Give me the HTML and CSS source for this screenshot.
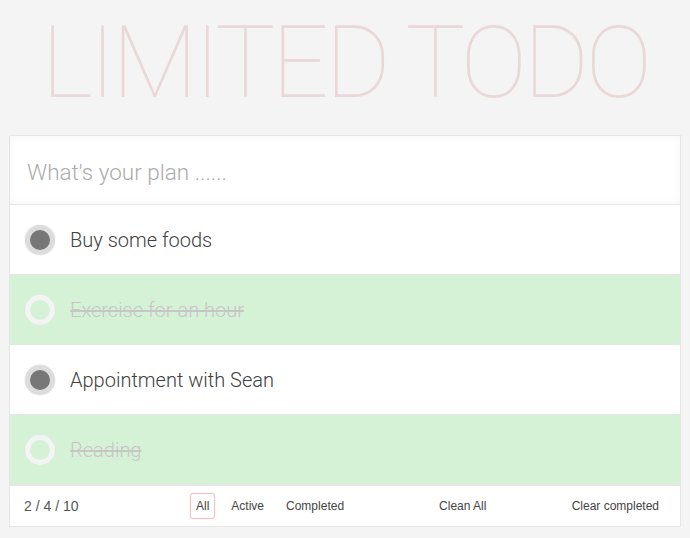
FILE: index.html
```html
<!DOCTYPE html>
<html>
<head>
<meta charset="utf-8">
<link rel="stylesheet" href="styles.css">
</head>
<body>
<div class="app">
  <h1 class="title">LIMITED TODO</h1>
  <section class="board">
    <div class="new-row">
      <input class="new-todo" placeholder="What's your plan ......">
    </div>
    <ul class="list">
      <li class="item">
        <span class="toggle"></span>
        <span class="label">Buy some foods</span>
      </li>
      <li class="item done">
        <span class="toggle"></span>
        <span class="label">Exercise for an hour</span>
      </li>
      <li class="item">
        <span class="toggle"></span>
        <span class="label">Appointment with Sean</span>
      </li>
      <li class="item done">
        <span class="toggle"></span>
        <span class="label">Reading</span>
      </li>
    </ul>
    <footer class="footer">
      <span class="count">2 / 4 / 10</span>
      <ul class="filters">
        <li><a class="filter selected">All</a></li>
        <li><a class="filter">Active</a></li>
        <li><a class="filter">Completed</a></li>
      </ul>
      <a class="clean-all">Clean All</a>
      <a class="clear-completed">Clear completed</a>
    </footer>
  </section>
</div>
</body>
</html>
```

FILE: styles.css
```css
html, body {
  margin: 0;
  padding: 0;
  background: #f4f4f4;
}

.app {
  padding: 0 9px;
}

.title {
  margin: 0;
  height: 135px;
  box-sizing: border-box;
  padding-top: 8px;
  text-align: center;
  font-family: Roboto, "Liberation Sans", sans-serif;
  font-weight: 100;
  font-size: 100px;
  line-height: 110px;
  letter-spacing: -3.5px;
  color: #ead8d8;
}

.board {
  background: #fff;
  border: 1px solid #e6e6e6;
}

.new-row {
  height: 68px;
  border-bottom: 1px solid #e6e6e6;
  box-shadow: inset 0 0 10px rgba(0, 0, 0, 0.04);
  display: flex;
  align-items: center;
}

.new-todo {
  border: 0;
  outline: 0;
  background: transparent;
  width: 100%;
  padding: 3px 0 0 17px;
  font-family: Roboto, "Liberation Sans", sans-serif;
  font-weight: 300;
  font-size: 22.5px;
  color: #333;
}

.new-todo::placeholder {
  color: #ababab;
}

.list {
  list-style: none;
  margin: 0;
  padding: 0;
}

.item {
  height: 69px;
  border-bottom: 1px solid #e6e6e6;
  display: flex;
  align-items: center;
  padding-left: 15px;
  gap: 15px;
  font-family: Roboto, "Liberation Sans", sans-serif;
  font-weight: 300;
  font-size: 20px;
  color: #404040;
}

.toggle {
  width: 20px;
  height: 20px;
  border-radius: 50%;
  border: 5px solid #dcdcdc;
  background: #777;
  box-shadow: 0 0 2px rgba(0, 0, 0, 0.12);
  flex: none;
}

.item.done {
  background: #d6f2d6;
}

.item.done .toggle {
  background: transparent;
  border-color: #f3f4f3;
  box-shadow: 0 0 1px rgba(0, 0, 0, 0.05);
}

.item.done .label {
  color: #c6c6c6;
  text-decoration: line-through;
}

.footer {
  height: 40px;
  border-top: 1px solid #e6e6e6;
  display: flex;
  align-items: center;
  padding: 0 21px 0 14px;
  font-family: "Liberation Sans", Arial, sans-serif;
  font-size: 12px;
  color: #555;
}

.count {
  font-size: 14px;
  width: 161px;
}

.filters {
  list-style: none;
  margin: 0;
  padding: 0;
  display: flex;
}

.filter {
  display: block;
  margin: 0 5px;
  padding: 6px 5px;
  line-height: 12px;
  border: 1px solid transparent;
  border-radius: 3px;
  color: #444;
}

.filter.selected {
  border-color: rgba(200, 80, 80, 0.35);
  box-shadow: 0 0 2px rgba(200, 80, 80, 0.2);
}

.clean-all {
  margin-left: 84px;
  color: #444;
}

.clear-completed {
  margin-left: auto;
  color: #444;
}
```
